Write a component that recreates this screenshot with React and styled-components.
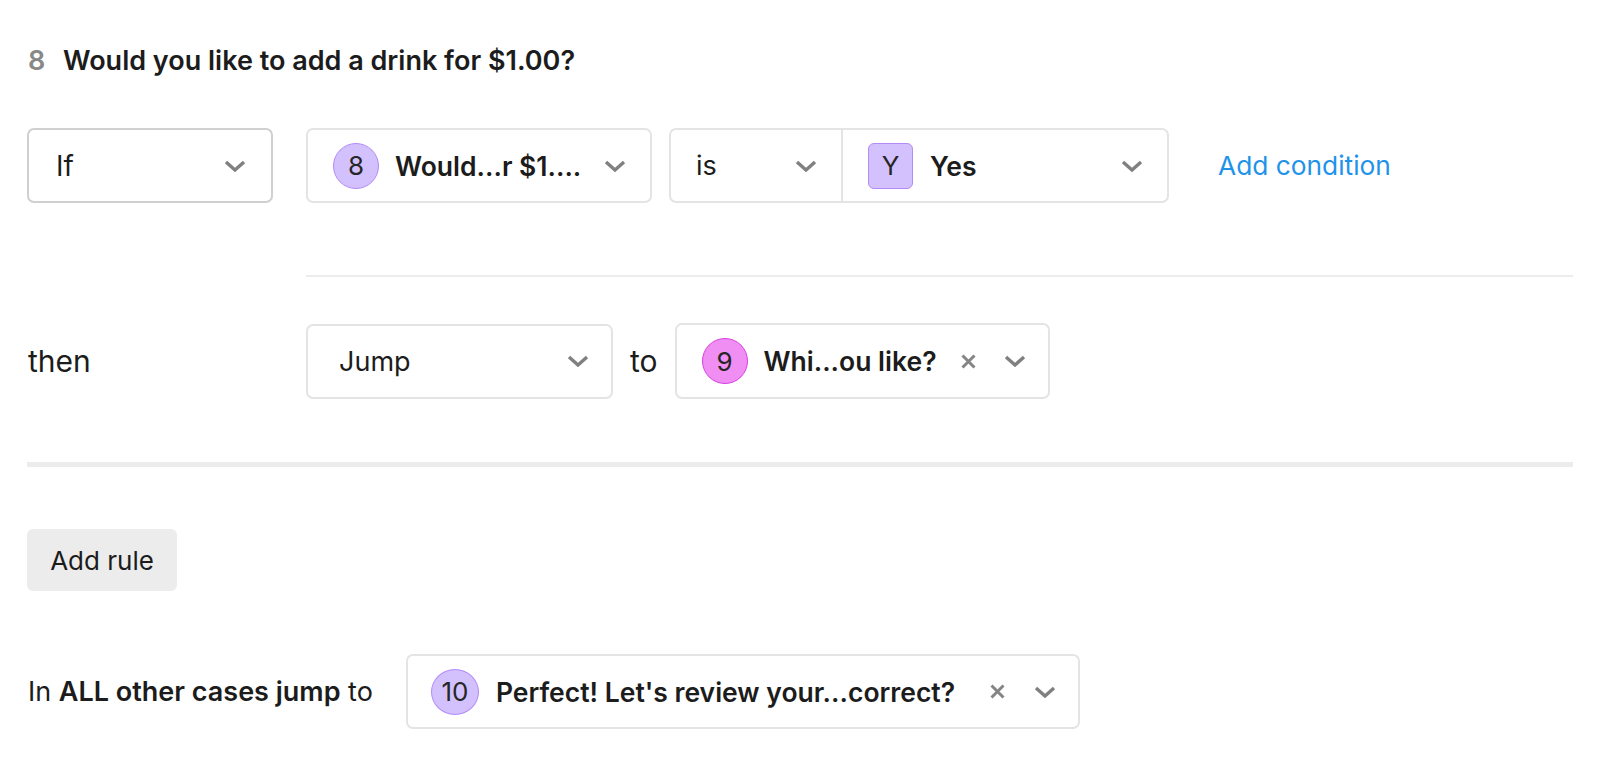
import React from 'react';
import styled, { createGlobalStyle } from 'styled-components';

const GlobalStyle = createGlobalStyle`
  html, body {
    margin: 0;
    padding: 0;
    background: #ffffff;
  }
  body {
    font-family: Inter, "Noto Sans", "Liberation Sans", sans-serif;
    color: #1c1c1c;
  }
`;

const Page = styled.div`
  display: flex;
  flex-direction: column;
  align-items: flex-start;
  padding: 46px 27px 0 27px;
  min-height: 775px;
  box-sizing: border-box;
`;

const Header = styled.div`
  display: flex;
  align-items: center;
  height: 30px;
  font-size: 27px;
  line-height: 30px;
  font-weight: 600;
`;

const HeaderNumber = styled.span`
  color: #888888;
  width: 35px;
  padding-left: 1px;
`;

const HeaderTitle = styled.span`
  color: #1c1c1c;
`;

const Section = styled.div`
  display: grid;
  grid-template-columns: 279px 1fr;
  align-items: center;
  width: 100%;
  margin-top: ${(p) => p.$top}px;
`;

const Label = styled.span`
  font-size: 30px;
  color: #1c1c1c;
  padding-left: 1px;
`;

const Controls = styled.div`
  display: flex;
  align-items: center;
  gap: 17px;
`;

const Select = styled.div`
  display: flex;
  align-items: center;
  box-sizing: border-box;
  width: ${(p) => p.$width}px;
  height: ${(p) => p.$height || 75}px;
  padding: 0 ${(p) => p.$right || 24}px 0 ${(p) => p.$left || 25}px;
  border: 2px solid ${(p) => (p.$strong ? '#d0d0d0' : '#e4e4e4')};
  border-radius: 7px;
  background: #ffffff;
`;

const SplitSelect = styled.div`
  display: flex;
  align-items: stretch;
  box-sizing: border-box;
  width: ${(p) => p.$width}px;
  height: 75px;
  border: 2px solid #e4e4e4;
  border-radius: 7px;
  margin-right: 32px;
`;

const SplitPart = styled.div`
  display: flex;
  align-items: center;
  box-sizing: border-box;
  width: ${(p) => p.$width}px;
  padding: 0 24px 0 25px;
  border-left: ${(p) => (p.$divided ? '2px solid #e4e4e4' : 'none')};
`;

const SelectText = styled.span`
  flex: 1;
  font-size: ${(p) => p.$size || 27}px;
  font-weight: ${(p) => (p.$bold ? 600 : 400)};
  color: #1c1c1c;
  white-space: nowrap;
  overflow: hidden;
`;

const Badge = styled.span`
  display: inline-flex;
  align-items: center;
  justify-content: center;
  box-sizing: border-box;
  flex: none;
  width: ${(p) => p.$width || 46}px;
  height: 46px;
  margin-right: ${(p) => p.$gap || 16}px;
  border-radius: ${(p) => (p.$square ? '6px' : '50%')};
  background: ${(p) => (p.$pink ? '#f08ef4' : '#d3c1fd')};
  border: 1.5px solid ${(p) => (p.$pink ? '#d83ee0' : '#b48af6')};
  font-size: 26px;
  color: #262626;
`;

const IconSlot = styled.span`
  display: inline-flex;
  align-items: center;
  flex: none;
  margin-left: ${(p) => p.$gap || 0}px;
`;

const LinkText = styled.span`
  font-size: 26.3px;
  color: #1f93ea;
  white-space: nowrap;
`;

const ToText = styled.span`
  font-size: 30px;
  color: #1c1c1c;
`;

const Divider = styled.div`
  grid-column: 2;
  height: 2px;
  background: #ececec;
  margin-top: 72px;
`;

const ThickDivider = styled.div`
  width: 100%;
  height: 5px;
  background: #ececec;
  margin-top: 63px;
`;

const AddRuleButton = styled.button`
  margin-top: 62px;
  width: 150px;
  height: 62px;
  border: none;
  border-radius: 6px;
  background: #ececec;
  font-family: inherit;
  font-size: 26px;
  color: #1c1c1c;
  padding: 0;
`;

const FallbackRow = styled.div`
  display: flex;
  align-items: center;
  gap: 33px;
  margin-top: 63px;
`;

const FallbackText = styled.span`
  font-size: 27px;
  color: #1c1c1c;
  padding-left: 1px;
  white-space: nowrap;
  b {
    font-weight: 600;
  }
`;

const Chevron = () => (
  <svg width="22" height="12" viewBox="0 0 22 12">
    <path d="M2 2 L11 10 L20 2" fill="none" stroke="#808080" strokeWidth="3.4" strokeLinejoin="miter" />
  </svg>
);

const Cross = () => (
  <svg width="15" height="15" viewBox="0 0 15 15">
    <path d="M1.5 1.5 L13.5 13.5 M13.5 1.5 L1.5 13.5" fill="none" stroke="#858585" strokeWidth="3" />
  </svg>
);

export default function App() {
  return (
    <>
      <GlobalStyle />
      <Page>
        <Header>
          <HeaderNumber>8</HeaderNumber>
          <HeaderTitle>Would you like to add a drink for $1.00?</HeaderTitle>
        </Header>

        <Section $top={52}>
          <Select $width={246} $strong $left={27} $right={25}>
            <SelectText $size={28}>If</SelectText>
            <IconSlot><Chevron /></IconSlot>
          </Select>
          <Controls>
            <Select $width={346} $right={24}>
              <Badge>8</Badge>
              <SelectText $bold $size={26.5}>Would...r $1....</SelectText>
              <IconSlot><Chevron /></IconSlot>
            </Select>
            <SplitSelect $width={500}>
              <SplitPart $width={170}>
                <SelectText>is</SelectText>
                <IconSlot><Chevron /></IconSlot>
              </SplitPart>
              <SplitPart $width={326} $divided>
                <Badge $square $width={45} $gap={17}>Y</Badge>
                <SelectText $bold $size={26.5}>Yes</SelectText>
                <IconSlot><Chevron /></IconSlot>
              </SplitPart>
            </SplitSelect>
            <LinkText>Add condition</LinkText>
          </Controls>
          <Divider />
        </Section>

        <Section $top={46}>
          <Label>then</Label>
          <Controls>
            <Select $width={307} $left={31} $right={22}>
              <SelectText>Jump</SelectText>
              <IconSlot><Chevron /></IconSlot>
            </Select>
            <ToText>to</ToText>
            <Select $width={375} $height={76} $right={22}>
              <Badge $pink>9</Badge>
              <SelectText $bold $size={26.5}>Whi...ou like?</SelectText>
              <IconSlot><Cross /></IconSlot>
              <IconSlot $gap={28}><Chevron /></IconSlot>
            </Select>
          </Controls>
        </Section>

        <ThickDivider />

        <AddRuleButton>Add rule</AddRuleButton>

        <FallbackRow>
          <FallbackText>
            In <b>ALL other cases jump</b> to
          </FallbackText>
          <Select $width={674} $left={23} $right={22}>
            <Badge $width={48} $gap={17}>10</Badge>
            <SelectText $bold $size={26.5}>Perfect! Let's review your...correct?</SelectText>
            <IconSlot><Cross /></IconSlot>
            <IconSlot $gap={29}><Chevron /></IconSlot>
          </Select>
        </FallbackRow>
      </Page>
    </>
  );
}
